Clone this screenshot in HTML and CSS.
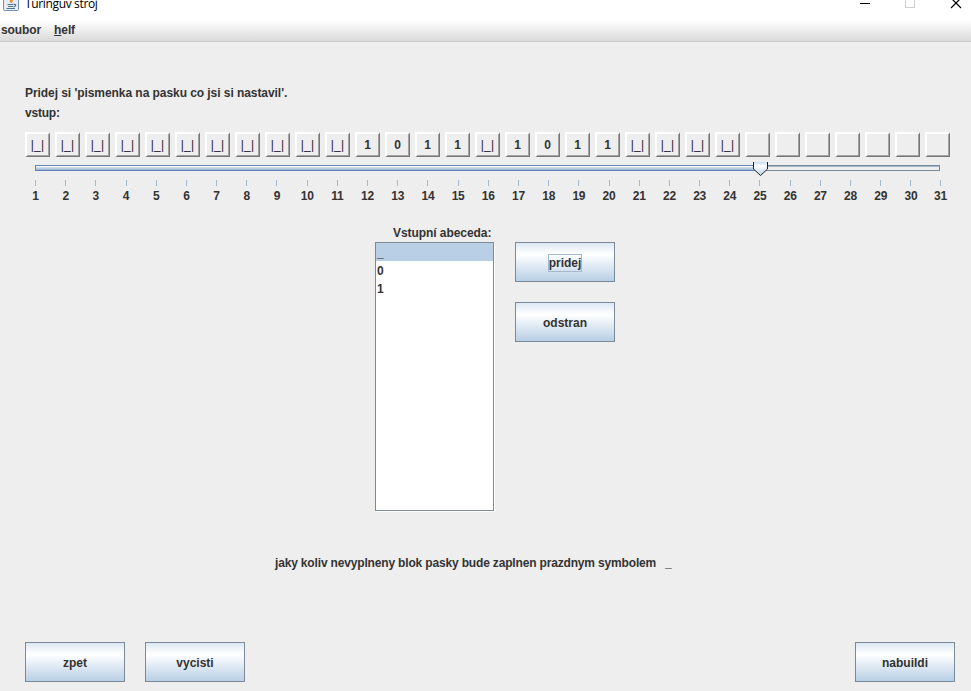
FILE: index.html
```html
<!DOCTYPE html>
<html lang="cs">
<head>
<meta charset="utf-8">
<title>Turinguv stroj</title>
<link rel="stylesheet" href="styles.css">
</head>
<body>
<header class="titlebar">
  <svg class="app-icon" width="16" height="16" viewBox="0 0 16 16">
    <rect x=".5" y=".5" width="15" height="15" rx="1" fill="#e6eef4" stroke="#7592a8"/>
    <path d="M8.500 2C10 4 6.500 5 7.500 7.500M10 4.500C8 5.500 9.500 6.500 8.500 8" fill="none" stroke="#e58a3a" stroke-width="1.300"/>
    <path d="M4.500 9.500H10.500M5 11.500H10M11 9.500C13.500 9 13 11.500 10.500 12M3.500 13.500H12" fill="none" stroke="#4b7396" stroke-width="1.200"/>
  </svg>
  <span class="title">Turinguv stroj</span>
  <svg class="controls" width="104" height="20" viewBox="0 0 104 20" fill="none" shape-rendering="crispEdges">
    <path d="M0 3.500H10" stroke="#000"/>
    <rect x="45.500" y="-1.500" width="9" height="9" stroke="#ccc"/>
    <path d="M91 -2L101 8M101 -2L91 8" stroke="#000" stroke-width="1.200" shape-rendering="auto"/>
  </svg>
</header>
<nav class="menubar"><span>soubor</span><span><u>h</u>elf</span></nav>
<main>
  <p class="hint">Pridej si 'pismenka na pasku co jsi si nastavil'.</p>
  <p class="label-input">vstup:</p>
  <div class="tape">
    <span class="blank">|_|</span><span class="blank">|_|</span><span class="blank">|_|</span><span class="blank">|_|</span><span class="blank">|_|</span><span class="blank">|_|</span><span class="blank">|_|</span><span class="blank">|_|</span><span class="blank">|_|</span><span class="blank">|_|</span><span class="blank">|_|</span><span>1</span><span>0</span><span>1</span><span>1</span><span class="blank">|_|</span><span>1</span><span>0</span><span>1</span><span>1</span><span class="blank">|_|</span><span class="blank">|_|</span><span class="blank">|_|</span><span class="blank">|_|</span><span></span><span></span><span></span><span></span><span></span><span></span><span></span>
  </div>
  <div class="slider">
    <div class="track"><div class="fill"></div></div>
    <svg class="thumb" width="15" height="14" viewBox="0 0 15 14">
      <defs><linearGradient id="knob" x1="0" y1="0" x2="0" y2="1"><stop offset="0" stop-color="#c8ddf2"/><stop offset=".3" stop-color="#fff"/><stop offset="1" stop-color="#b8cfe5"/></linearGradient></defs>
      <path d="M.5 0V7L7.500 13.500L14.500 7V0Z" fill="url(#knob)"/>
      <path d="M.5 0V7L7.500 13.500L14.500 7V0" fill="none" stroke="#222"/>
    </svg>
    <div class="scale">
      <span>1</span><span>2</span><span>3</span><span>4</span><span>5</span><span>6</span><span>7</span><span>8</span><span>9</span><span>10</span><span>11</span><span>12</span><span>13</span><span>14</span><span>15</span><span>16</span><span>17</span><span>18</span><span>19</span><span>20</span><span>21</span><span>22</span><span>23</span><span>24</span><span>25</span><span>26</span><span>27</span><span>28</span><span>29</span><span>30</span><span>31</span>
    </div>
  </div>
  <section class="alphabet">
    <div class="picker">
      <p class="caption">Vstupní abeceda:</p>
      <ul class="list"><li class="selected">_</li><li>0</li><li>1</li></ul>
    </div>
    <div class="actions">
      <button class="btn"><span class="focus">pridej</span></button>
      <button class="btn">odstran</button>
    </div>
  </section>
  <p class="note"><span class="note-text">jaky koliv nevyplneny blok pasky bude zaplnen prazdnym symbolem</span><span class="symbol">_</span></p>
  <footer class="footer">
    <button class="btn">zpet</button>
    <button class="btn">vycisti</button>
    <button class="btn last">nabuildi</button>
  </footer>
</main>
</body>
</html>
```
FILE: styles.css
```css
* { box-sizing: border-box; margin: 0; padding: 0; }
body {
  width: 971px;
  height: 691px;
  overflow: hidden;
  background: #eee;
  color: #333;
  font: bold 12px/16px "Liberation Sans", Arial, sans-serif;
}
.titlebar { display: flex; height: 20px; background: #fff; }
.app-icon { margin: -5px 0 0 3px; }
.title { margin: -4px 0 0 6px; color: #000; font: 12px/16px "Open Sans", sans-serif; letter-spacing: -0.35px; }
.controls { margin-left: auto; margin-right: 7px; }
.menubar {
  display: flex;
  gap: 13px;
  height: 22px;
  padding: 2px 0 0 1px;
  background: linear-gradient(#fff, #dadada);
  border-bottom: 1px solid #ccc;
  letter-spacing: -0.1px;
}
.hint { margin: 43px 0 0 25px; letter-spacing: -0.06px; }
.label-input { margin: 4px 0 0 25px; letter-spacing: -0.2px; }
.tape { display: flex; gap: 5px; margin: 11px 0 0 25px; }
.tape span {
  width: 25px;
  height: 25px;
  padding-right: 1px;
  border: 2px solid #fff;
  border-right: 1px solid #757575;
  border-bottom: 1px solid #757575;
  box-shadow: inset -1px -1px #a3a3a3;
  line-height: 22px;
  text-align: center;
}
.tape .blank { color: #2b1c30; font-weight: normal; letter-spacing: 0.15px; }
.slider { position: relative; height: 48px; padding-top: 8px; }
.track {
  width: 905px;
  height: 6px;
  margin-left: 35px;
  border: 1px solid #7a8a99;
  box-shadow: inset 0 1px #a3b8cc;
}
.fill {
  width: 726px;
  height: 6px;
  margin: -1px 0 0 -1px;
  border: 1px solid #6382bf;
  background: linear-gradient(#fff 25%, #c8dcea 25% 50%, #b8cfe5 50% 75%, #a3b8cc 75%);
}
.thumb { position: absolute; left: 753px; top: 5px; }
.scale { display: flex; margin: 9px 0 0 20.4px; }
.scale span { flex: none; width: 30.2px; text-align: center; letter-spacing: -0.2px; }
.scale span:last-child { margin-left: -0.700px; }
.scale span::before {
  content: "";
  display: block;
  width: 1px;
  height: 6px;
  margin: 0 auto 2px;
  background: #a3b8cc;
}
.alphabet { display: flex; gap: 20px; margin: 20px 0 0 375px; }
.picker { width: 120px; }
.caption { padding-left: 18px; white-space: nowrap; letter-spacing: -0.06px; }
.list {
  width: 119px;
  height: 269px;
  margin-top: 1px;
  border: 1px solid #7a8a99;
  background: #fff;
  box-shadow: 1px 1px #fff;
  list-style: none;
}
.list li { height: 18px; padding-left: 1px; line-height: 20px; }
.list .selected { background: #b8cfe5; color: #222; }
.actions { display: flex; flex-direction: column; gap: 20px; padding-top: 17px; }
.btn {
  width: 100px;
  height: 40px;
  padding-top: 2px;
  border: 1px solid #7a8a99;
  background: linear-gradient(#dde8f3, #fff 30%, #b8cfe5);
  color: #333;
  font: inherit;
}
.focus { display: inline-block; height: 18px; margin-top: -2px; border: 1px solid #a3b8cc; line-height: 17px; }
.note { display: flex; gap: 9px; margin: 44px 0 0 275px; }
.note-text { letter-spacing: -0.165px; white-space: nowrap; }
.symbol { color: #222; }
.footer { display: flex; gap: 20px; margin: 71px 16px 0 25px; }
.last { margin-left: auto; }
```
